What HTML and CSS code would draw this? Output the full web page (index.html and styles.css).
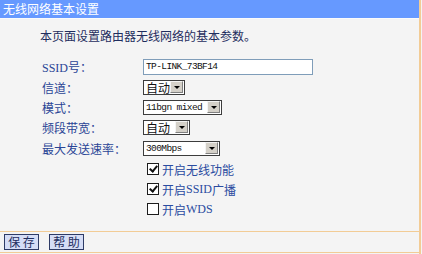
FILE: index.html
```html
<!DOCTYPE html>
<html lang="zh-CN">
<head>
  <meta charset="UTF-8">
  <title>无线网络基本设置</title>
  <link rel="stylesheet" href="styles.css">
</head>
<body>
  <div class="page">
    <div class="title">无线网络基本设置</div>

    <div class="content">
      <p class="intro">本页面设置路由器无线网络的基本参数。</p>

      <div class="form">
        <div class="row">
          <span class="label"><span class="latin">SSID</span>号：</span>
          <span class="textbox">TP-LINK_73BF14</span>
        </div>
        <div class="row">
          <span class="label">信道：</span>
          <span class="select w40"><span class="val cjk">自动</span><span class="arrow"></span></span>
        </div>
        <div class="row">
          <span class="label">模式：</span>
          <span class="select w77"><span class="val">11bgn mixed</span><span class="arrow"></span></span>
        </div>
        <div class="row">
          <span class="label">频段带宽：</span>
          <span class="select w45"><span class="val cjk">自动</span><span class="arrow"></span></span>
        </div>
        <div class="row tall">
          <span class="label">最大发送速率：</span>
          <span class="select w75"><span class="val">300Mbps</span><span class="arrow"></span></span>
        </div>
        <div class="row">
          <span class="label"></span>
          <span class="option"><span class="check on"></span>开启无线功能</span>
        </div>
        <div class="row">
          <span class="label"></span>
          <span class="option"><span class="check on"></span>开启<span class="latin">SSID</span>广播</span>
        </div>
        <div class="row">
          <span class="label"></span>
          <span class="option"><span class="check"></span>开启<span class="latin">WDS</span></span>
        </div>
      </div>
    </div>

    <div class="footer">
      <button class="btn">保 存</button>
      <button class="btn">帮 助</button>
    </div>
  </div>
</body>
</html>
```

FILE: styles.css
```css
body {
  margin: 0;
  background-color: #f4f4f4;
  font-family: "Noto Sans CJK SC", "Noto Sans", sans-serif;
  font-size: 12px;
}
.page {
  width: 419px;
  height: 254px;
  border-right: 2px solid #f2cc96;
  display: flex;
  flex-direction: column;
}
.title {
  height: 18px;
  line-height: 18px;
  padding-left: 3px;
  background-color: #6699ff;
  color: #fff;
  border-bottom: 1px solid #fbfbfb;
}
.content {
  flex: 1;
}
.intro {
  margin: 10px 0 0 40px;
  height: 14px;
  line-height: 14px;
  color: #1f2d5e;
}
.form {
  margin-top: 14px;
  padding-left: 42px;
}
.row {
  height: 20px;
  display: flex;
  align-items: center;
}
.row.tall {
  height: 22px;
}
.label {
  width: 101px;
  color: #2a4596;
}
.latin {
  font-family: "Liberation Serif", serif;
}
.textbox {
  width: 166px;
  height: 14px;
  line-height: 14px;
  padding-left: 2px;
  border: 1px solid #7f9db9;
  background-color: #fff;
  font-family: "Liberation Mono", monospace;
  font-size: 9.5px;
  letter-spacing: -0.6px;
  color: #111;
}
.select {
  height: 13px;
  display: flex;
  align-items: center;
  justify-content: space-between;
  border: 1px solid #3c3c3c;
  background-color: #fff;
  padding: 0 1px 0 2px;
}
.w40 { width: 37px; }
.w45 { width: 42px; }
.w75 { width: 72px; }
.w77 { width: 74px; }
.val {
  font-family: "Liberation Mono", monospace;
  font-size: 9.5px;
  letter-spacing: -0.6px;
  color: #111;
}
.val.cjk {
  font-family: "Noto Sans CJK SC", sans-serif;
  font-size: 12px;
  letter-spacing: 0;
  line-height: 13px;
}
.arrow {
  width: 11px;
  height: 10px;
  background-color: #d4d0c8;
  border: 1px solid #f4f4f4;
  border-right-color: #808080;
  border-bottom-color: #808080;
  position: relative;
}
.arrow::after {
  content: "";
  position: absolute;
  left: 3px;
  top: 4px;
  border-left: 3px solid transparent;
  border-right: 3px solid transparent;
  border-top: 3px solid #000;
}
.option {
  display: flex;
  align-items: center;
  margin-left: 4px;
  color: #2a4ba0;
}
.check {
  width: 10px;
  height: 10px;
  margin-right: 3px;
  border: 1px solid #1c1c1c;
  background-color: #fff;
  position: relative;
}
.check.on::after {
  content: "";
  position: absolute;
  left: 3px;
  top: 0px;
  width: 3px;
  height: 6px;
  border-right: 2px solid #111;
  border-bottom: 2px solid #111;
  transform: rotate(40deg);
}
.footer {
  height: 20px;
  margin-bottom: 1px;
  border-top: 1px solid #f2cc96;
  border-bottom: 1px solid #f2cc96;
  display: flex;
  align-items: center;
  gap: 10px;
  padding-left: 4px;
}
.btn {
  width: 35px;
  height: 16px;
  padding: 0;
  border: 1px solid #2e3b66;
  background-color: #d5ddf6;
  color: #1f2d5e;
  font-family: "Noto Sans CJK SC", sans-serif;
  font-size: 12px;
  line-height: 14px;
}
```
